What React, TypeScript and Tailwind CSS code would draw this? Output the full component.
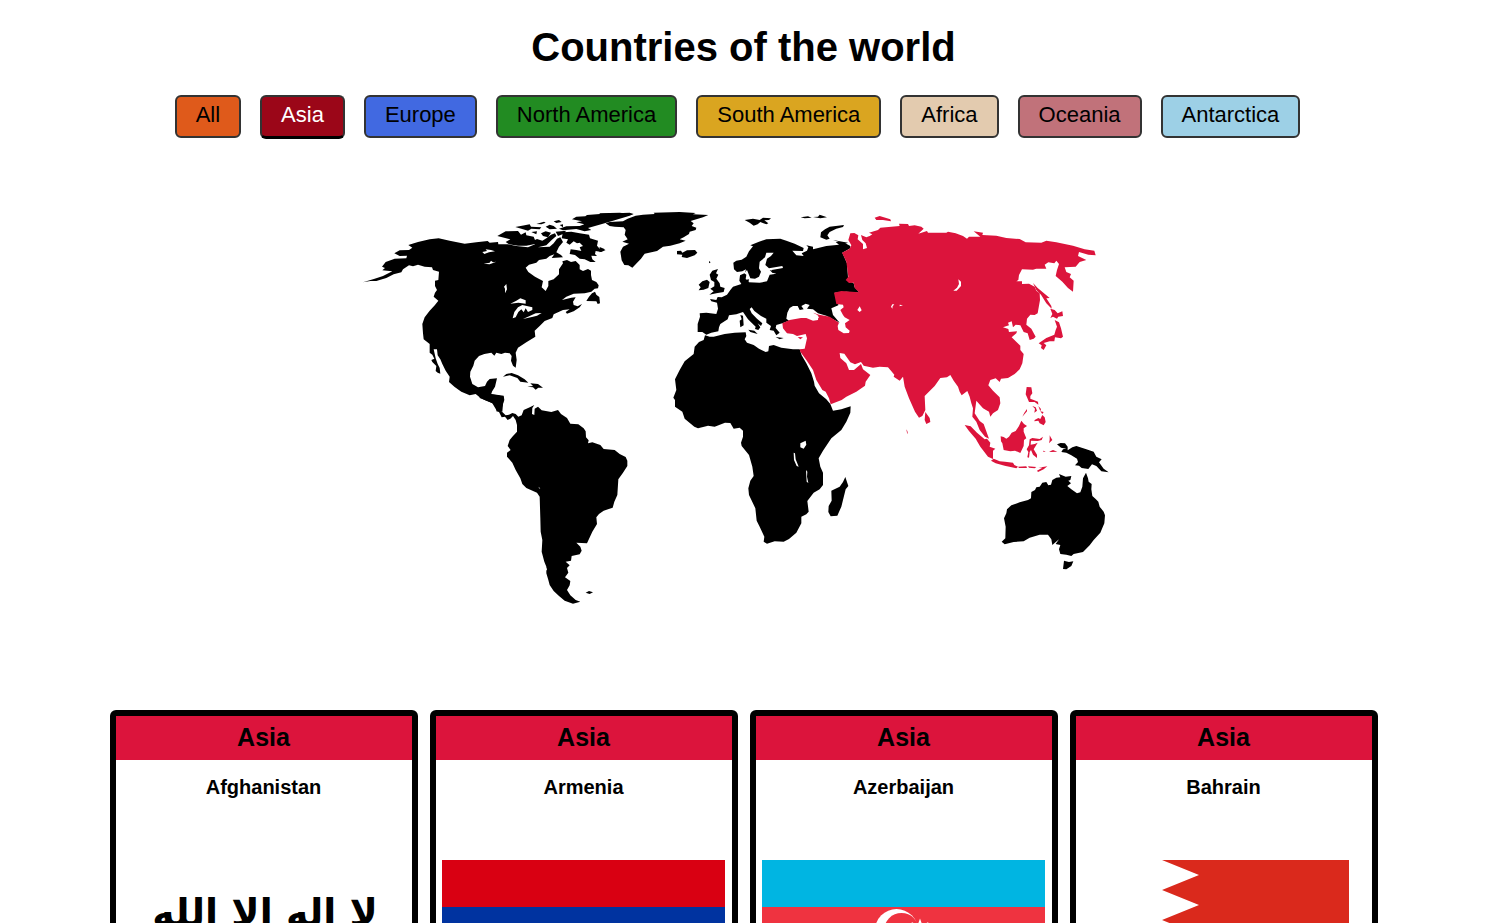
import { useState } from "react";
import type { ReactNode } from "react";

type Continent = { name: string; color: string; active: string };

const continents: Continent[] = [
  { name: "All", color: "bg-[#df5a1b]", active: "bg-[#a83c0b]" },
  { name: "Asia", color: "bg-[#dc143c]", active: "bg-[#9b0618]" },
  { name: "Europe", color: "bg-[#4169e1]", active: "bg-[#1d3fa8]" },
  { name: "North America", color: "bg-[#228b22]", active: "bg-[#0d5c0d]" },
  { name: "South America", color: "bg-[#daa520]", active: "bg-[#93690a]" },
  { name: "Africa", color: "bg-[#e3cbaf]", active: "bg-[#8f7757]" },
  { name: "Oceania", color: "bg-[#c1727a]", active: "bg-[#8a3c45]" },
  { name: "Antarctica", color: "bg-[#9dd0e6]", active: "bg-[#3f7f9b]" },
];

function WorldMap() {
  return (
    <svg viewBox="1033 513 2397 1440" className="w-[799px] max-w-full" role="img" aria-label="World map">
      {/* North America */}
      <g transform="translate(1050 600)">
        <path d="M40 247L75 236L100 228L128 214L112 212L98 211L106 204L97 200L108 186L135 176L170 175L172 167L150 168L134 160L150 151L178 150L188 143L176 135L205 126L240 118L267 115L300 122L345 131L380 127L414 123L420 128L445 126L446 133L475 133L500 138L535 142L556 133L548 124L562 117L578 122L590 115L604 104L616 100L620 108L606 120L590 136L565 142L600 140L612 130L622 116L632 112L640 126L628 140L620 157L634 165L640 172L606 174L614 163L600 168L590 176L568 180L560 188L538 194L528 203L536 216L556 230L570 238L580 243L576 262L588 273L596 258L596 243L612 238L628 223L628 208L640 190L638 184L652 180L664 186L678 183L690 195L690 208L700 213L715 207L724 212L724 225L727 240L740 246L747 256L745 265L735 266L725 275L705 280L672 281L650 290L637 300L665 293L678 292L670 305L672 315L684 319L697 312L690 322L672 334L652 341L648 336L660 328L640 330L612 343L608 354L585 363L570 378L555 392L557 410L530 427L505 443L498 458L501 480L498 503L490 497L484 482L486 468L480 460L466 458L455 462L440 458L434 467L425 458L404 462L388 468L375 482L371 497L362 515L361 530L368 552L385 562L406 558L412 545L420 537L442 535L436 560L422 583L445 586L462 590L460 612L458 635L440 630L428 610L405 600L390 592L378 582L360 586L335 575L315 561L298 546L300 530L288 512L278 492L272 478L264 466L262 448L252 448L258 475L264 492L270 504L272 521L264 518L258 513L260 498L248 486L245 480L254 476L248 464L240 458L240 432L222 418L220 400L218 372L225 352L240 332L256 315L266 302L252 290L256 278L262 270L256 258L256 242L266 240L268 215L250 210L247 202L225 200L205 194L190 199L178 196L160 208L155 217L132 223L110 234L80 243L62 243Z" />
        <path d="M262 278L272 286L277 298L266 298ZM736 275L740 284L749 291L751 310L744 312L740 304L710 303L718 290L727 280Z" />
        <path d="M443 108L468 94L505 93L514 104L528 97L530 106L552 110L556 120L556 132L530 137L505 137L478 133L468 126L482 118Z" />
        <path d="M497 81L525 76L540 73L544 80L575 82L570 88L545 86L535 92L520 88Z" />
        <path d="M560 72L583 65L588 68L575 73ZM612 64L628 60L636 66L620 69ZM588 80L600 74L612 78L622 86L600 88ZM630 75L640 73L640 82ZM574 100L588 94L604 98L595 112L580 108ZM545 96L562 94L560 103Z" />
        <path d="M667 58L680 50L707 49L712 45L760 41L840 38L852 42L840 47L790 62L757 72L715 84L725 90L705 94L680 87L640 91L628 86L650 79L690 78L704 73L680 67L697 64Z" />
        <path d="M618 95L650 92L640 102L625 108ZM640 97L665 95L690 100L718 104L721 115L745 122L742 137L750 146L768 150L755 156L738 153L736 162L742 168L725 167L728 178L738 186L722 186L705 178L690 176L676 165L660 162L663 148L680 150L695 153L690 142L700 138L690 128L682 130L672 124L660 134L650 128L655 118L636 115Z" />
        <path d="M460 530L470 522L486 519L505 526L525 538L536 548L512 545L503 534L480 526Z" />
        <path d="M533 560L550 558L542 550L565 552L580 563L566 563L558 569L550 562Z" />
        <g className="fill-white">
          <path d="M398 156L412 153L408 148L424 150L436 154L418 157L404 162ZM402 191L420 188L424 182L430 187L440 185L420 193ZM463 260L470 252L472 268L466 280L466 266Z" />
          <path d="M482 311L500 302L512 295L528 301L528 311L506 308Z" />
          <path d="M489 355L494 336L505 322L518 315L548 322L548 330L535 336L528 325L522 337L528 344L515 328L506 336L498 352Z" />
          <path d="M520 357L540 348L558 340L576 339L562 347L550 350Z" />
        </g>
      </g>

      {/* South America with the isthmus */}
      <g transform="translate(1440 1170)">
        <path d="M0 -5L38 -8L35 12L72 17L74 30L68 48L64 62L78 76L88 74L98 69L108 72L116 80L126 76L132 60L152 51L164 45L158 54L157 72L164 75L165 56L175 50L186 61L215 66L235 60L244 72L262 84L272 101L296 103L312 115L318 124L319 142L327 151L325 160L338 157L362 165L372 177L405 180L420 192L438 201L443 212L443 228L430 248L416 268L413 315L404 335L399 353L372 362L358 372L350 382L352 402L338 425L322 460L290 458L302 470L306 482L300 493L276 498L274 512L258 515L270 526L262 534L266 548L256 562L272 573L270 586L262 600L272 616L288 630L302 635L280 641L255 632L238 618L222 603L210 585L206 570L200 550L200 530L194 515L186 485L188 450L183 425L182 385L180 320L172 308L140 294L128 282L122 265L108 240L98 218L82 200L82 188L93 180L84 168L90 150L100 138L112 125L112 105L108 90L100 78L92 86L84 90L76 80L66 82L58 66L50 64L50 47L36 38L0 24Z" />
        <path d="M318 608L328 603L340 607L330 612Z" />
        <path d="M177 290L182 296L178 295ZM194 522L202 538L200 542Z" className="fill-white" />
      </g>

      {/* Greenland, Iceland and Europe */}
      <g transform="translate(1800 600)">
        <path d="M0 40L60 38L100 43L60 51L20 60L0 68Z" />
        <path d="M18 70L30 66L70 64L84 56L108 47L130 44L165 42L162 38L240 36L288 39L280 43L326 45L310 52L290 58L273 63L282 70L276 78L290 83L288 90L270 95L268 102L252 112L240 118L258 122L240 130L212 137L190 140L172 153L135 161L124 176L98 203L86 196L74 195L66 181L62 155L70 140L88 131L68 125L84 118L75 104L78 90L72 82L45 80L30 78Z" />
        <path d="M232 153L244 152L248 158L262 151L286 150L293 158L285 166L262 174L246 171L248 164L232 163Z" />
        <path d="M435 60L460 56L480 60L490 53L514 55L508 60L494 61L506 70L500 73L482 66L474 73L462 77L450 68ZM603 52L625 49L636 53L615 55ZM640 51L655 50L660 44L682 52L662 55ZM328 183L333 187L328 190ZM0 141L16 148L0 157Z" />
        <path d="M733 75L730 81L710 86L690 96L683 106L690 116L680 119L662 112L664 97L676 88L690 80ZM700 120L745 128L735 132Z" />
        <path d="M330 224L338 212L355 207L349 220L356 224L350 236L360 250L362 260L375 264L372 276L350 280L329 284L342 274L332 266L344 259L344 246L334 240Z" />
        <path d="M297 271L303 262L297 254L308 244L322 239L330 246L326 264L312 269Z" />
        <path d="M331 297L350 300L354 291L366 292L382 284L392 270L400 260L425 252L419 242L421 226L436 219L439 208L428 214L412 216L403 208L401 188L410 182L426 179L440 170L448 154L460 139L452 136L478 125L500 118L542 116L560 122L585 131L612 144L610 153L578 152L590 166L612 168L606 160L622 152L626 142L620 136L640 140L640 148L680 138L718 134L708 126L730 126L752 138L752 145L728 158L742 190L745 232L752 245L762 250L765 262L780 278L740 275L705 278L715 305L716 316L695 325L700 345L720 368L700 358L680 347L655 340L640 328L622 326L630 315L618 311L605 318L612 328L600 330L594 318L580 318L570 324L563 338L560 356L568 362L548 370L530 375L528 384L540 398L530 406L522 392L510 390L514 378L500 368L500 356L484 348L464 333L456 322L450 327L456 340L472 356L488 370L484 378L474 370L482 382L476 390L466 387L468 380L445 358L430 336L410 343L388 346L384 358L362 372L358 382L356 394L335 398L320 404L308 396L294 396L294 372L301 350L300 340L320 338L350 342L355 326L352 308L335 304Z" />
        <path d="M446 389L464 392L474 402L452 396ZM422 345L430 347L432 376L422 382L420 362L426 358ZM528 411L552 414L540 418Z" />
        <path
          d="M500 158L522 158L514 168L502 176L497 195L508 205L548 198L550 204L516 210L518 218L530 221L510 224L502 244L480 248L448 247L438 237L440 224L434 220L442 210L452 235L466 236L478 230L484 215L478 205L480 185L496 172Z"
          className="fill-white"
        />
        <path d="M436 240L448 238L446 248L438 250ZM510 210L524 214L518 218Z" />
      </g>

      {/* Africa */}
      <g transform="translate(1980 960)">
        <path d="M136 46L150 50L162 50L195 42L225 38L258 37L260 48L255 58L262 68L282 75L298 86L318 96L326 94L328 78L342 75L365 83L400 88L420 88L426 106L440 130L455 160L463 185L465 197L478 220L500 238L512 252L520 272L545 268L573 259L572 278L560 305L545 330L515 355L490 392L477 415L482 440L490 458L490 495L480 508L462 518L443 543L447 575L440 583L425 590L425 610L410 638L388 657L372 665L345 664L322 671L312 665L314 650L300 620L291 602L287 565L268 525L266 505L272 482L282 468L278 440L268 405L246 378L244 368L250 350L250 332L240 323L222 326L212 309L196 308L165 320L145 317L115 325L104 320L75 296L68 275L46 260L46 240L41 233L50 210L46 178L60 150L75 124L102 102L105 80L118 66L132 60Z" />
        <path d="M557 471L566 498L558 508L545 560L533 587L513 589L506 576L507 558L516 542L515 512L540 500L550 486Z" />
        <path d="M422 370L438 362L440 374L432 386L422 382ZM402 398L406 400L408 418L417 440L411 438L403 420ZM439 450L443 455L442 470L446 489L441 485Z" className="fill-white" />
      </g>

      {/* Oceania */}
      <g transform="translate(2670 1080)">
        <path d="M350 460L352 448L365 436L390 427L415 420L424 415L425 396L436 390L440 382L450 380L458 368L470 366L476 376L484 374L488 360L500 353L512 352L508 342L528 350L545 348L542 360L536 362L544 370L533 378L545 388L562 400L572 397L578 380L580 355L589 338L595 355L597 365L606 372L605 388L608 408L618 417L626 425L630 440L642 455L646 466L644 490L632 518L612 540L600 556L580 576L552 582L545 588L530 584L512 582L508 568L512 555L498 552L508 538L488 555L485 538L475 524L450 524L420 533L402 544L372 546L345 553L336 545L347 535L348 500L343 475Z" />
        <path d="M523 602L538 606L551 604L545 618L530 628L520 627Z" />
        <path d="M502 253L513 249L526 250L534 260L534 271L548 262L560 258L590 268L612 275L620 290L636 298L628 307L642 326L657 337L635 334L620 318L607 313L596 327L576 324L568 317L556 316L565 306L562 296L545 286L530 278L515 276L520 268L530 266L514 263Z" />
      </g>

      {/* Asia */}
      <g className="fill-[#dc143c]">
        <g transform="translate(2460 600)">
          <path d="M67 158L90 146L95 136L86 120L92 100L104 99L116 106L114 118L130 132L130 148L142 144L138 130L128 120L124 105L140 112L150 108L158 103L148 98L175 90L182 83L240 78L238 71L265 72L268 78L285 76L305 80L312 86L296 101L322 93L325 98L380 98L385 95L408 100L430 108L442 116L448 110L482 110L462 94L490 98L488 105L530 107L560 114L600 117L618 127L665 128L680 122L710 127L760 137L795 148L824 152L828 166L806 164L778 156L775 168L800 180L780 186L768 200L735 202L740 216L754 222L750 232L762 242L760 275L745 264L728 245L708 228L712 210L718 192L710 182L704 190L686 187L675 194L680 206L650 206L640 209L607 208L598 225L596 240L590 244L607 244L607 252L628 251L645 260L650 272L660 280L661 300L654 340L645 345L632 344L622 356L620 374L635 386L648 410L642 416L630 420L624 400L612 396L602 376L588 374L580 382L576 364L565 368L568 376L550 382L566 387L568 396L592 394L590 400L576 412L602 437L602 450L612 462L608 490L600 508L585 522L565 534L544 536L540 546L528 535L512 540L506 556L520 572L540 592L542 610L535 630L520 640L512 650L508 635L490 625L470 602L465 640L480 663L492 672L508 716L496 710L480 690L470 665L458 650L460 625L455 610L450 590L443 573L426 586L420 575L415 560L402 542L392 525L382 532L362 534L345 558L315 588L317 630L308 648L298 653L286 635L268 595L255 560L250 530L240 542L222 530L224 524L205 502L180 500L160 503L132 497L124 486L106 493L92 487L74 461L60 459L62 474L80 490L88 510L103 510L124 492L130 508L152 525L138 545L136 557L110 575L80 590L66 600L33 613L28 595L18 575L8 570L-10 540L-20 510L-40 480L-58 455L-60 448L-45 446L-38 415L-42 402L-68 408L-80 402L-98 400L-110 385L-112 370L-90 360L-56 354L-40 354L-20 362L-5 360L-4 348L-20 338L-2 344L30 350L58 368L54 378L56 390L72 400L88 399L90 392L78 382L76 370L90 360L75 352L70 345L62 330L72 322L70 314L50 312L43 278L65 273L118 277L105 264L102 248L88 249L78 240L86 230L80 185Z" />
          <path d="M165 53L180 48L212 58L214 64L190 60L170 60Z" />
          <path d="M640 249L654 264L690 294L680 295L695 318L696 326L680 310L664 284L650 270ZM692 326L705 330L714 340L728 334L730 348L716 350L712 356L700 350L692 354L698 342ZM705 360L718 367L724 385L730 410L724 415L706 412L704 424L690 424L672 429L680 436L672 450L664 444L666 436L657 430L680 414L704 404L708 390L712 380Z" />
          <path
            d="M416 238L424 245L424 258L411 272L401 272L412 263L418 252ZM113 330L120 319L126 331L120 336ZM214 320L218 313L224 313L219 319L218 326ZM240 314L250 316L240 319ZM-22 340L-8 344L-2 354L-20 352Z"
            className="fill-white"
          />
          <path d="M-66 411L-50 412L-58 418Z" />
        </g>
        <g transform="translate(2670 1080)">
          <path d="M107 156L120 174L122 186L110 192L105 180ZM50 208L53 213L55 223L52 218ZM225 195L243 199L262 218L285 238L292 236L302 248L300 260L317 266L310 272L310 297L295 290L272 260L258 236L238 213Z" />
          <path d="M304 302L312 296L330 304L346 305L370 308L374 315L385 320L380 325L345 317L318 310ZM385 320L410 319L412 324L388 324ZM415 319L440 321L435 325L418 323ZM446 323L473 319L462 328L445 336L442 332L458 323Z" />
          <path d="M333 229L342 231L350 236L358 230L366 218L378 213L388 198L395 182L403 192L412 198L402 205L402 215L410 235L403 240L402 258L392 279L376 272L362 274L342 270L338 250L334 244Z" />
          <path d="M420 238L428 234L450 237L460 230L456 240L444 243L424 242L423 254L435 252L444 248L438 258L432 268L442 284L442 294L430 284L424 270L420 276L418 293L413 292L416 276L411 268L418 256ZM480 226L484 233L488 240L478 250L480 240ZM478 275L490 270L503 275L485 276ZM460 272L468 274L462 276Z" />
          <path d="M411 81L425 82L428 100L422 108L422 116L432 120L445 125L446 134L435 126L418 126L412 112L408 103ZM412 147L412 154L398 170L404 158ZM428 138L438 142L442 152L434 158L436 146ZM446 138L454 147L452 154ZM452 154L462 156L458 162ZM435 180L446 174L452 177L458 165L465 172L468 186L462 196L450 190L446 182L434 184Z" />
        </g>
      </g>
    </svg>
  );
}

function AfghanistanFlag() {
  return (
    <svg viewBox="0 0 283 142" className="h-auto w-[283px]" role="img" aria-label="Flag of Afghanistan">
      <rect width="283" height="142" fill="#fff" />
      <g
        fontFamily="'DejaVu Sans', 'Noto Sans', sans-serif"
        fontSize="38"
        fontWeight="700"
        textAnchor="middle"
        direction="rtl"
      >
        <text x="143" y="66">لا إله إلا الله</text>
        <text x="143" y="110">محمد رسول الله</text>
      </g>
    </svg>
  );
}

function ArmeniaFlag() {
  return (
    <svg viewBox="0 0 283 141" className="h-auto w-[283px]" role="img" aria-label="Flag of Armenia">
      <rect width="283" height="47" fill="#d90012" />
      <rect y="47" width="283" height="47" fill="#0033a0" />
      <rect y="94" width="283" height="47" fill="#f2a800" />
    </svg>
  );
}

function AzerbaijanFlag() {
  return (
    <svg viewBox="0 0 283 141" className="h-auto w-[283px]" role="img" aria-label="Flag of Azerbaijan">
      <rect width="283" height="47" fill="#00b5e2" />
      <rect y="47" width="283" height="47" fill="#ef3340" />
      <rect y="94" width="283" height="47" fill="#509e2f" />
      <circle cx="134.500" cy="70.500" r="21.500" fill="#fff" />
      <circle cx="139.500" cy="70.500" r="17.500" fill="#ef3340" />
      <path
        d="M158 58.500L160.300 65L166.500 62L163.500 68.200L170 70.500L163.500 72.800L166.500 79L160.300 76L158 82.500L155.700 76L149.500 79L152.500 72.800L146 70.500L152.500 68.200L149.500 62L155.700 65Z"
        fill="#fff"
      />
    </svg>
  );
}

function BahrainFlag() {
  return (
    <svg viewBox="0 0 250 150" className="h-auto w-[250px]" role="img" aria-label="Flag of Bahrain">
      <rect width="250" height="150" fill="#fff" />
      <path d="M250 0H63L100 15L63 30L100 45L63 60L100 75L63 90L100 105L63 120L100 135L63 150H250Z" fill="#da291c" />
    </svg>
  );
}

const countries: { name: string; flag: ReactNode }[] = [
  { name: "Afghanistan", flag: <AfghanistanFlag /> },
  { name: "Armenia", flag: <ArmeniaFlag /> },
  { name: "Azerbaijan", flag: <AzerbaijanFlag /> },
  { name: "Bahrain", flag: <BahrainFlag /> },
];

export default function App() {
  const [selected, setSelected] = useState("Asia");

  return (
    <div className="bg-white pt-6 pb-8 font-['Liberation_Sans',Arial,sans-serif] text-black">
      <h1 className="text-center text-[40px] leading-[47px] font-bold">Countries of the world</h1>

      <nav aria-label="Continents" className="mt-6 flex flex-wrap items-start justify-center gap-[19px] pr-3">
        {continents.map((c) => {
          const isActive = c.name === selected;
          return (
            <button
              key={c.name}
              type="button"
              aria-pressed={isActive}
              onClick={() => setSelected(c.name)}
              className={`cursor-pointer rounded-md border-2 border-[#333] px-[19px] pt-1 pb-2 text-[22px] leading-[27px] ${
                isActive ? `${c.active} border-b-[3px] border-b-black text-white` : c.color
              }`}
            >
              {c.name}
            </button>
          );
        })}
      </nav>

      <div className="mt-8 flex justify-center">
        <WorldMap />
      </div>

      <main className="mt-[59px] grid grid-cols-[repeat(auto-fit,308px)] justify-center gap-3">
        {countries.map((c) => (
          <article key={c.name} className="rounded-md border-[6px] border-black bg-white pb-12 text-center">
            <h2 className="bg-[#dc143c] pb-0.5 text-[25px] leading-[42px] font-bold">Asia</h2>
            <h3 className="pt-[15px] text-[20px] leading-6 font-bold">{c.name}</h3>
            <div className="mt-[61px] flex justify-center">{c.flag}</div>
          </article>
        ))}
      </main>
    </div>
  );
}
